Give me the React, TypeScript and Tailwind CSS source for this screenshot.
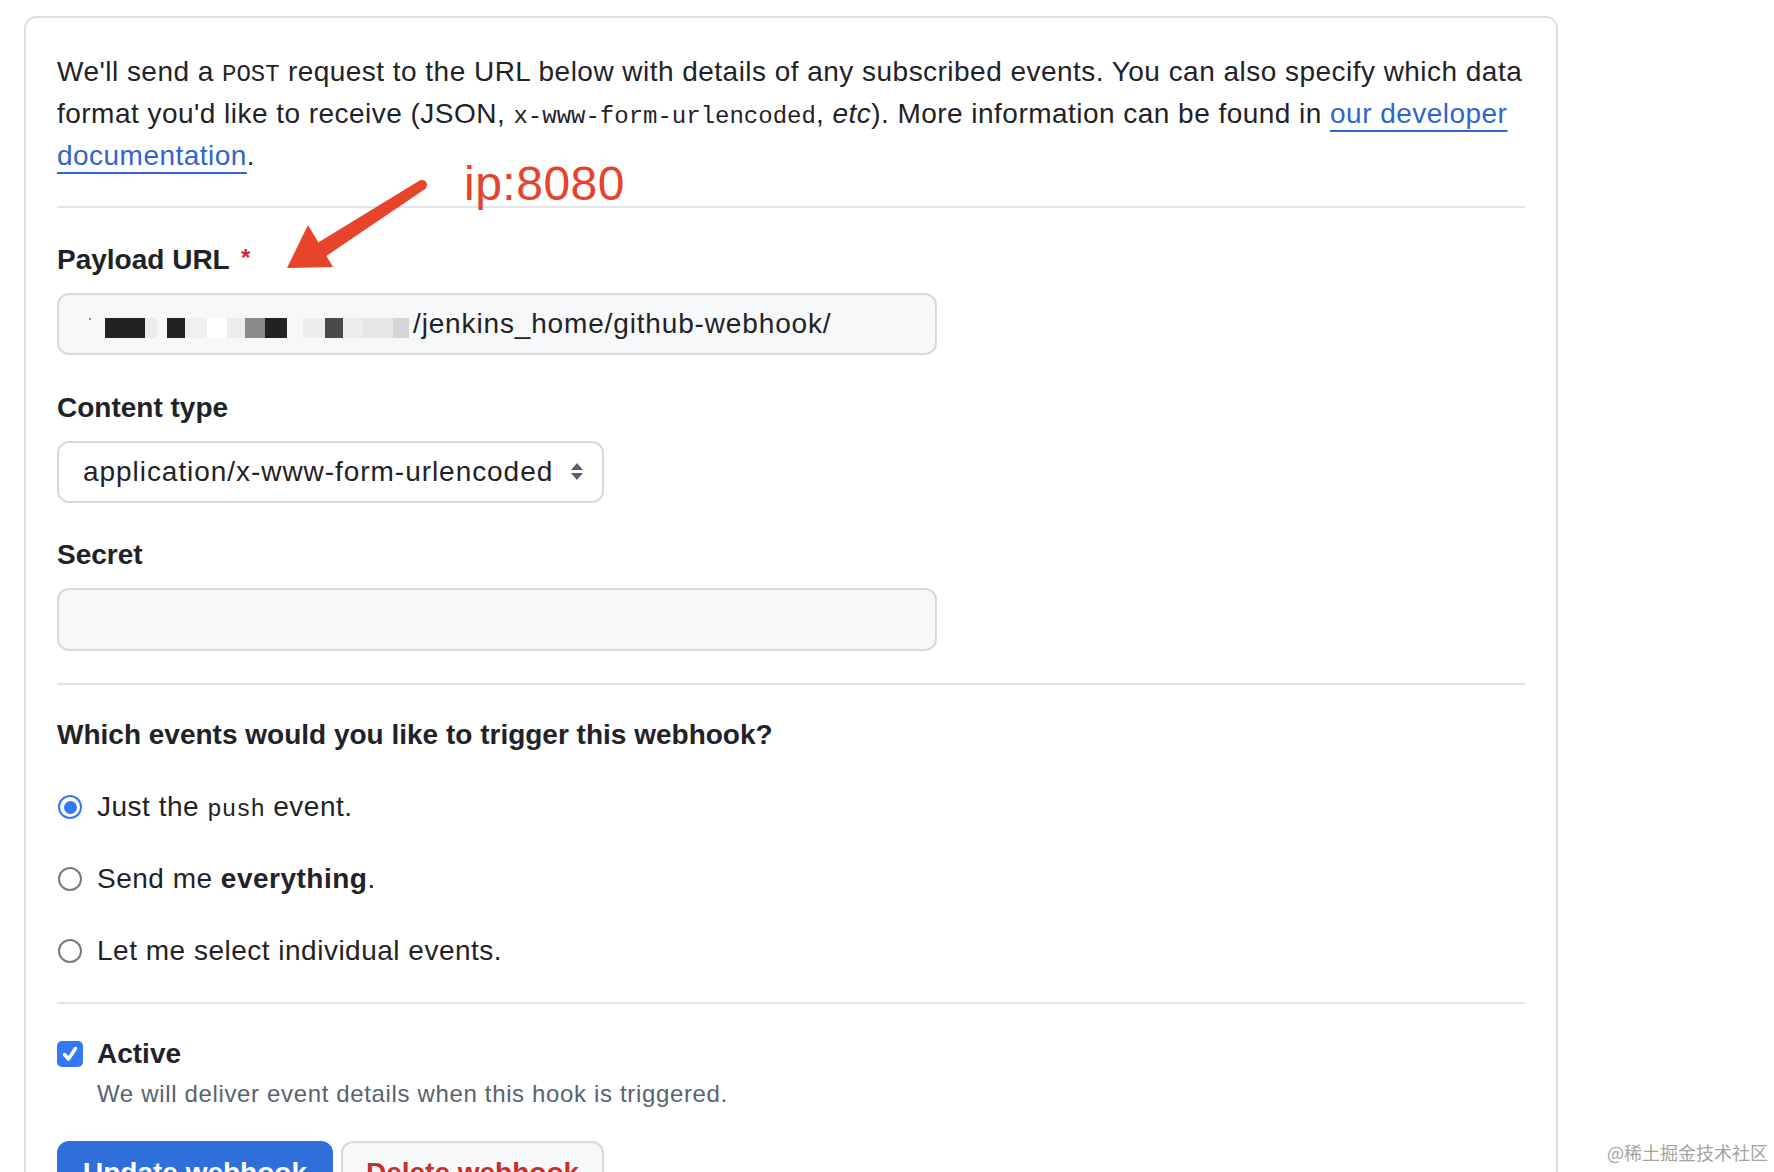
import React from "react";

const sans = "font-['Liberation_Sans',Arial,sans-serif]";
const mono = "font-['Liberation_Mono','DejaVu_Sans_Mono',monospace]";

function Radio({ checked, children }: { checked?: boolean; children: React.ReactNode }) {
  return (
    <label className="flex items-center h-[42px]">
      <span
        className={`ml-px w-[24px] h-[24px] rounded-full border-2 flex items-center justify-center bg-white ${
          checked ? "border-[#3478f6]" : "border-[#7a7a7a]"
        }`}
      >
        {checked && <span className="w-[13px] h-[13px] rounded-full bg-[#3478f6]" />}
      </span>
      <span className="ml-[15px] text-[28px] leading-[42px] tracking-[0.5px]">{children}</span>
    </label>
  );
}

// blurred / redacted host part of the payload URL
const redacted = [
  { w: 30, c: "bg-transparent" },
  { w: 2, c: "bg-[#888]", h: "h-[2px]" },
  { w: 14, c: "bg-transparent" },
  { w: 40, c: "bg-[#222]" },
  { w: 12, c: "bg-[#ececec]" },
  { w: 10, c: "bg-[#f6f8fa]" },
  { w: 18, c: "bg-[#222]" },
  { w: 22, c: "bg-[#efefef]" },
  { w: 20, c: "bg-white" },
  { w: 18, c: "bg-[#ececec]" },
  { w: 20, c: "bg-[#8a8a8a]" },
  { w: 22, c: "bg-[#222]" },
  { w: 16, c: "bg-[#f6f8fa]" },
  { w: 22, c: "bg-[#eeeeee]" },
  { w: 18, c: "bg-[#4a4a4a]" },
  { w: 20, c: "bg-[#ececec]" },
  { w: 30, c: "bg-[#e6e6e6]" },
  { w: 16, c: "bg-[#d6d6d6]" },
];

export default function App() {
  return (
    <div className={`relative h-[1172px] overflow-hidden bg-white text-[#1f2328] ${sans}`}>
      <div className="ml-6 mt-4 w-[1534px] min-h-[1300px] border-2 border-[#dcdfe3] rounded-xl px-[31px] pt-[33px]">
        <p className="text-[28px] leading-[42px] tracking-[0.47px] whitespace-nowrap">
          We'll send a <code className={`${mono} text-[24px] leading-none tracking-normal`}>POST</code> request to the URL
          below with details of any subscribed events. You can also specify which data
          <br />
          format you'd like to receive (JSON,{" "}
          <code className={`${mono} text-[24px] leading-none tracking-normal`}>x-www-form-urlencoded</code>, <em>etc</em>).
          More information can be found in{" "}
          <a className="text-[#2f66cc] underline underline-offset-[7px] decoration-2">
            our developer
            <br />
            documentation
          </a>
          .
        </p>

        <div className="mt-[29px] h-[2px] bg-[#e1e4e8]" />

        <div className="mt-[31px]">
          <div className="text-[28px] leading-[42px] font-bold">
            Payload URL <span className="text-[#cf222e] text-[24px] leading-none ml-1 relative -top-[3px]">*</span>
          </div>
          <div className="mt-3 w-[880px] h-[62px] rounded-xl border-2 border-[#d5d9de] bg-[#f6f8fa] flex items-center">
            <div className="flex items-start h-[20px] mt-[8px]">
              {redacted.map((b, i) => (
                <div key={i} style={{ width: b.w }} className={`${b.h ?? "h-[20px]"} ${b.c}`} />
              ))}
            </div>
            <span className="ml-1 text-[28px] leading-[42px] tracking-[0.85px]">/jenkins_home/github-webhook/</span>
          </div>
        </div>

        <div className="mt-8">
          <div className="text-[28px] leading-[42px] font-bold">Content type</div>
          <div className="mt-3 w-[547px] h-[62px] rounded-xl border-2 border-[#d5d9de] bg-white flex items-center pl-[24px] pr-[16px]">
            <span className="text-[28px] leading-[42px] tracking-[0.95px] flex-1">application/x-www-form-urlencoded</span>
            <svg width="16" height="20" viewBox="0 0 16 20" className="mr-[1px]">
              <path d="M8 1 L14 8 L2 8 Z" fill="#5a6069" />
              <path d="M2 11 L14 11 L8 18 Z" fill="#5a6069" />
            </svg>
          </div>
        </div>

        <div className="mt-[31px]">
          <div className="text-[28px] leading-[42px] font-bold">Secret</div>
          <div className="mt-3 w-[880px] h-[63px] rounded-xl border-2 border-[#d5d9de] bg-[#f6f8fa]" />
        </div>

        <div className="mt-8 h-[2px] bg-[#e1e4e8]" />

        <h3 className="mt-[29px] text-[28px] leading-[42px] font-bold">Which events would you like to trigger this webhook?</h3>

        <div className="mt-[30px] flex flex-col gap-[30px]">
          <Radio checked>
            Just the <code className={`${mono} text-[24px] leading-none tracking-normal`}>push</code> event.
          </Radio>
          <Radio>
            Send me <strong>everything</strong>.
          </Radio>
          <Radio>Let me select individual events.</Radio>
        </div>

        <div className="mt-[30px] h-[2px] bg-[#e1e4e8]" />

        <div className="mt-[29px] flex items-center h-[42px]">
          <span className="w-[26px] h-[26px] rounded-[5px] bg-[#3478f6] flex items-center justify-center">
            <svg width="18" height="18" viewBox="0 0 18 18">
              <path d="M3.5 9.5 L7.5 14 L14.5 3.5" stroke="white" strokeWidth="3.4" fill="none" strokeLinecap="round" strokeLinejoin="round" />
            </svg>
          </span>
          <span className="ml-[14px] text-[28px] leading-[42px] font-bold">Active</span>
        </div>
        <p className="mt-px ml-[40px] text-[24px] leading-[36px] tracking-[0.65px] text-[#59636e]">
          We will deliver event details when this hook is triggered.
        </p>

        <div className="mt-[29px] flex gap-2">
          <button className="w-[276px] h-[64px] rounded-xl bg-[#2f6fd9] text-white text-[28px] font-bold">Update webhook</button>
          <button className="w-[263px] h-[64px] rounded-xl border-2 border-[#d5d9de] bg-[#f6f8fa] text-[#c4302b] text-[28px] font-bold">
            Delete webhook
          </button>
        </div>
      </div>

      {/* red annotation */}
      <div className="absolute left-[464px] top-[160px] text-[48px] leading-[48px] tracking-[0.5px] text-[#e5432d] font-['Liberation_Sans',sans-serif]">
        ip:8080
      </div>
      <svg className="absolute left-[280px] top-[175px] pointer-events-none" width="150" height="100" viewBox="280 175 150 100">
        <polygon points="424.7,189.2 419.3,180.8 313.7,245.3 322.3,258.7" fill="#e8432b" />
        <circle cx="422" cy="185" r="5" fill="#e8432b" />
        <polygon points="308,225 287,268 333,267" fill="#e8432b" />
      </svg>

      <div className="absolute right-[6px] bottom-[8px] text-[18px] leading-[24px] text-[#a3a3a3] font-['Noto_Sans_CJK_SC',sans-serif]">
        @稀土掘金技术社区
      </div>
    </div>
  );
}
